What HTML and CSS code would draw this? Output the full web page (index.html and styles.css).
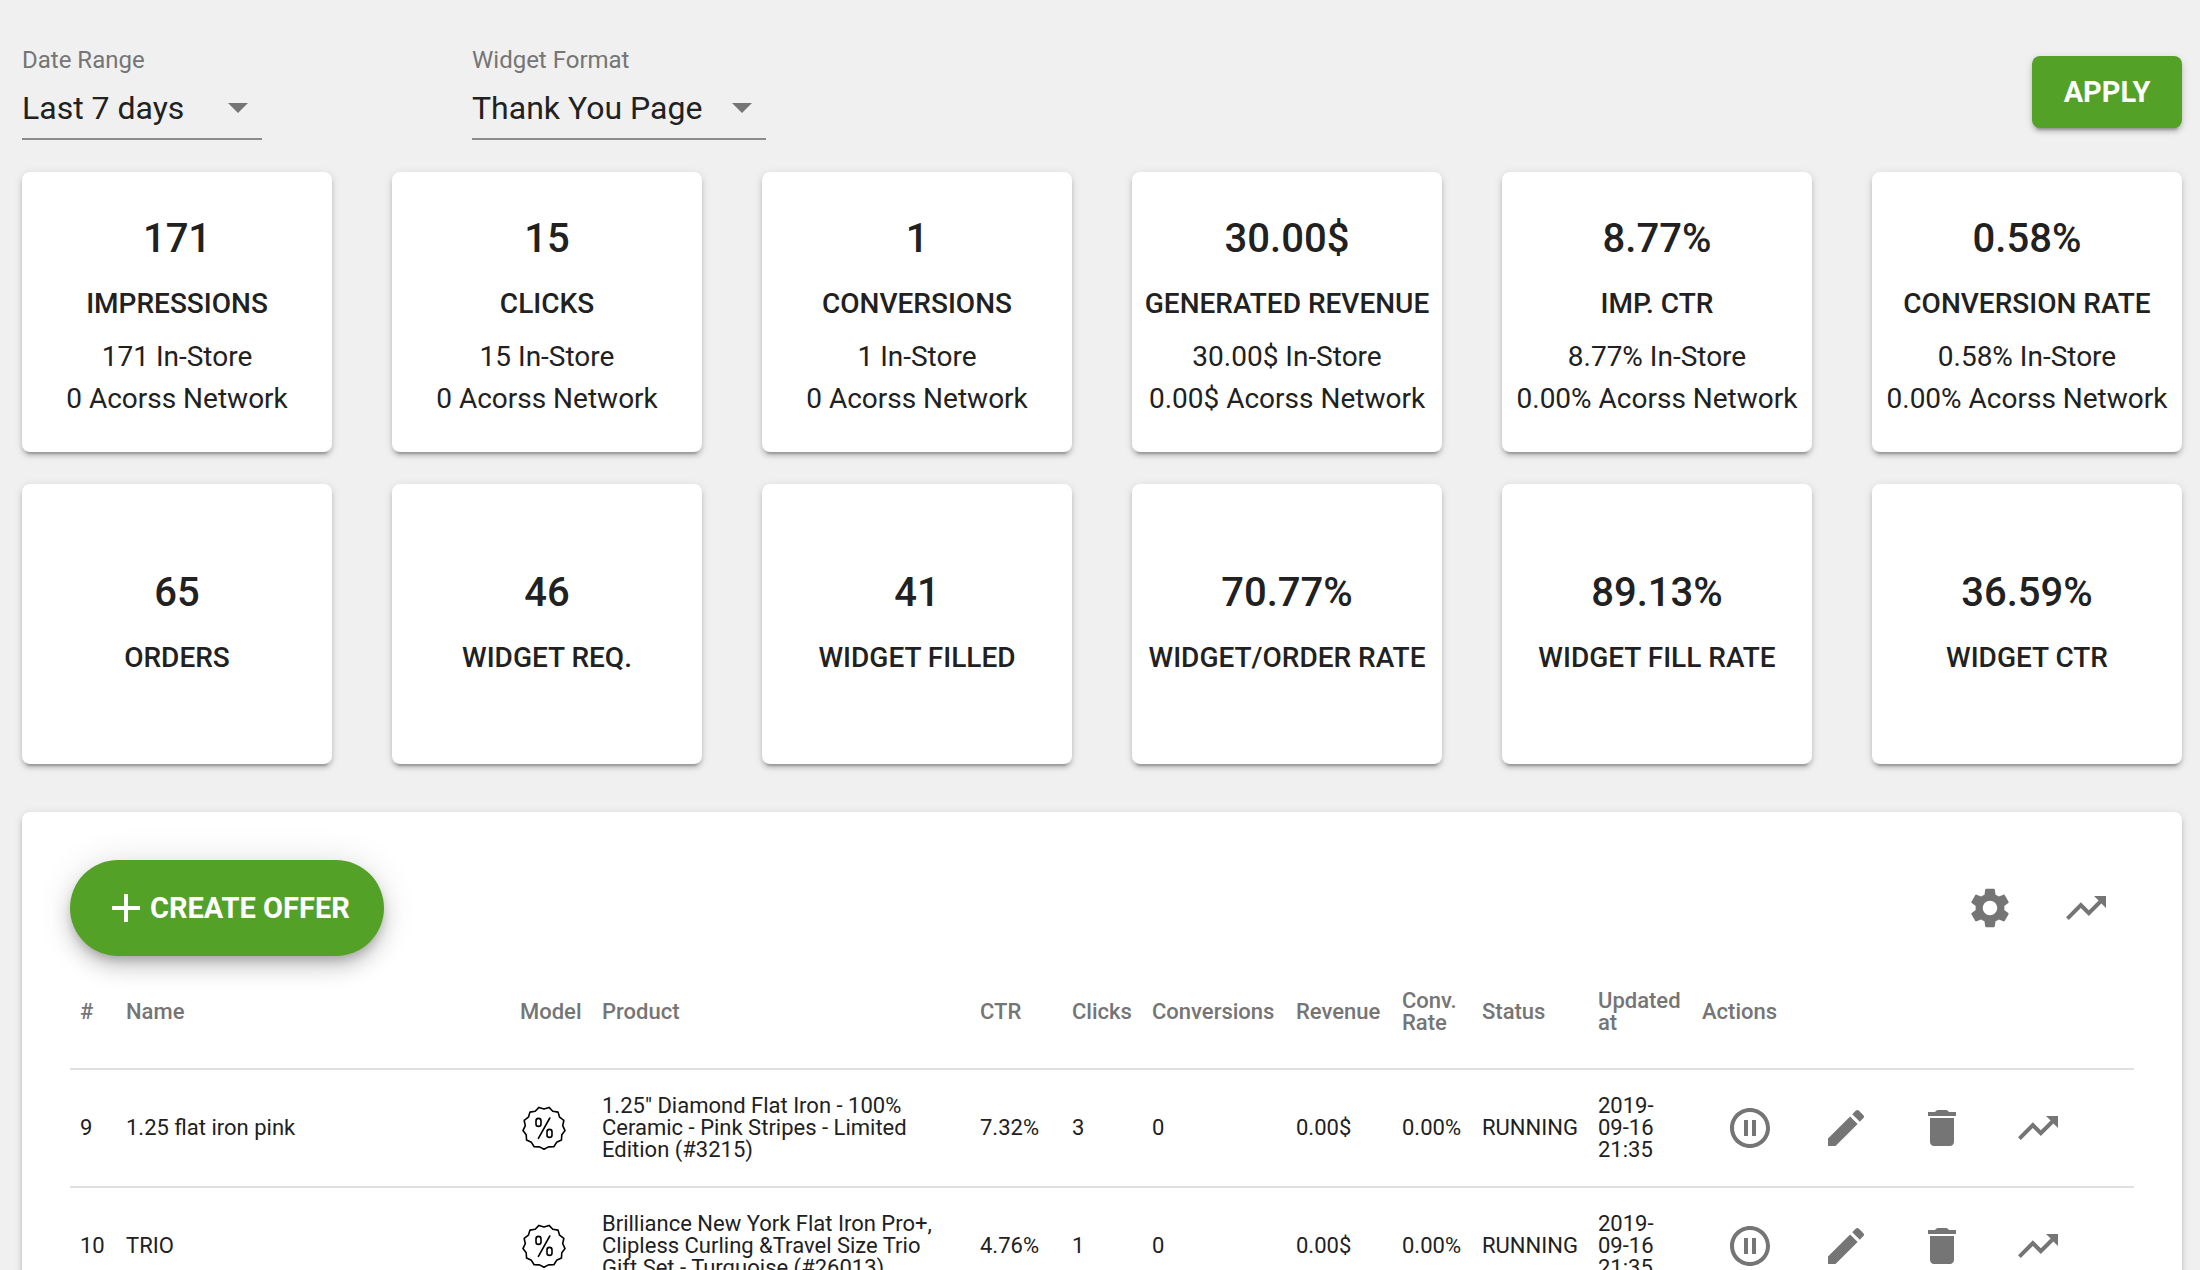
FILE: index.html
```html
<!DOCTYPE html>
<html lang="en">
<head>
<meta charset="utf-8">
<meta name="viewport" content="width=device-width, initial-scale=1">
<title>Offers</title>
<link rel="stylesheet" href="styles.css">
</head>
<body>
<svg class="sprite" aria-hidden="true">
  <symbol id="icon-trend" viewBox="0 0 24 24"><path d="M16 6l2.29 2.29-4.88 4.88-4-4L2 16.59 3.41 18l6-6 4 4 6.3-6.29L22 12V6z"/></symbol>
  <symbol id="icon-pause" viewBox="0 0 24 24"><path d="M9 16h2V8H9v8zm3-14C6.48 2 2 6.48 2 12s4.48 10 10 10 10-4.48 10-10S17.52 2 12 2zm0 18c-4.41 0-8-3.59-8-8s3.59-8 8-8 8 3.59 8 8-3.59 8-8 8zm1-4h2V8h-2v8z"/></symbol>
  <symbol id="icon-edit" viewBox="0 0 24 24"><path d="M3 17.25V21h3.75L17.81 9.94l-3.75-3.75L3 17.25zM20.71 7.04c.39-.39.39-1.02 0-1.41l-2.34-2.34c-.39-.39-1.02-.39-1.41 0l-1.83 1.83 3.75 3.75 1.83-1.83z"/></symbol>
  <symbol id="icon-delete" viewBox="0 0 24 24"><path d="M6 19c0 1.1.9 2 2 2h8c1.1 0 2-.9 2-2V7H6v12zM19 4h-3.5l-.71-.71c-.18-.18-.44-.29-.7-.29H9.91c-.26 0-.52.11-.7.29L8.5 4H5v2h14V4z"/></symbol>
  <symbol id="icon-settings" viewBox="0 0 24 24"><path d="M19.14 12.94c.04-.3.06-.61.06-.94 0-.32-.02-.64-.07-.94l2.03-1.58c.18-.14.23-.41.12-.61l-1.92-3.32c-.12-.22-.37-.29-.59-.22l-2.39.96c-.5-.38-1.03-.7-1.62-.94L14.4 2.81c-.04-.24-.24-.41-.48-.41h-3.84c-.24 0-.43.17-.47.41L9.25 5.35C8.66 5.59 8.12 5.92 7.63 6.29L5.24 5.33c-.22-.08-.47 0-.59.22L2.74 8.87C2.62 9.08 2.66 9.34 2.86 9.48l2.03 1.58C4.84 11.36 4.8 11.69 4.8 12s.02.64.07.94l-2.03 1.58c-.18.14-.23.41-.12.61l1.92 3.32c.12.22.37.29.59.22l2.39-.96c.5.38 1.03.7 1.62.94l.36 2.54c.05.24.24.41.48.41h3.84c.24 0 .44-.17.47-.41l.36-2.54c.59-.24 1.13-.56 1.62-.94l2.39.96c.22.08.47 0 .59-.22l1.92-3.32c.12-.22.07-.47-.12-.61L19.14 12.94zM12 15.6c-1.98 0-3.6-1.62-3.6-3.6s1.62-3.6 3.6-3.6 3.6 1.62 3.6 3.6-1.62 3.6-3.6 3.6z"/></symbol>
  <symbol id="icon-add" viewBox="0 0 24 24"><path d="M19 13h-6v6h-2v-6H5v-2h6V5h2v6h6v2z"/></symbol>
  <symbol id="icon-discount" viewBox="-24 -24 48 48">
    <g fill="none" stroke="#000" stroke-width="1.6" stroke-linejoin="round" stroke-linecap="round">
      <path d="M0 21.2L4.45 18.9 9.85 18.77 12.6 14.3 17.45 12.04 17.8 6.8 21.05 2.55 18.7-2.3 19.82-7.52 15.6-10.8 14.06-15.87 8.8-16.7 5.07-20.58 0-19-5.07-20.58-8.8-16.7-14.06-15.87-15.6-10.8-19.82-7.52-18.7-2.3-21.05 2.55-17.8 6.8-17.45 12.04-12.6 14.3-9.85 18.77-4.45 18.9Z"/>
      <rect x="-8" y="-9.6" width="5" height="8" rx="2.5"/>
      <rect x="3" y="1.4" width="5" height="8" rx="2.5"/>
      <path d="M5.8-10L-5.6 10.4"/>
    </g>
  </symbol>
</svg>

<main class="page">
  <form class="filters">
    <div class="field">
      <label for="range">Date Range</label>
      <div class="select">
        <select id="range" class="range"><option>Last 7 days</option><option>Last 30 days</option></select>
        <svg viewBox="0 0 20 10" aria-hidden="true"><path d="M0 0h20L10 10z"/></svg>
      </div>
    </div>
    <div class="field">
      <label for="format">Widget Format</label>
      <div class="select">
        <select id="format"><option>Thank You Page</option></select>
        <svg viewBox="0 0 20 10" aria-hidden="true"><path d="M0 0h20L10 10z"/></svg>
      </div>
    </div>
    <button class="apply" type="button">APPLY</button>
  </form>

  <section class="stats">
    <article class="card"><h2>171</h2><h3>IMPRESSIONS</h3><p>171 In-Store</p><p>0 Acorss Network</p></article>
    <article class="card"><h2>15</h2><h3>CLICKS</h3><p>15 In-Store</p><p>0 Acorss Network</p></article>
    <article class="card"><h2>1</h2><h3>CONVERSIONS</h3><p>1 In-Store</p><p>0 Acorss Network</p></article>
    <article class="card"><h2>30.00$</h2><h3>GENERATED REVENUE</h3><p>30.00$ In-Store</p><p>0.00$ Acorss Network</p></article>
    <article class="card"><h2>8.77%</h2><h3>IMP. CTR</h3><p>8.77% In-Store</p><p>0.00% Acorss Network</p></article>
    <article class="card"><h2>0.58%</h2><h3>CONVERSION RATE</h3><p>0.58% In-Store</p><p>0.00% Acorss Network</p></article>
    <article class="card"><h2>65</h2><h3>ORDERS</h3></article>
    <article class="card"><h2>46</h2><h3>WIDGET REQ.</h3></article>
    <article class="card"><h2>41</h2><h3>WIDGET FILLED</h3></article>
    <article class="card"><h2>70.77%</h2><h3>WIDGET/ORDER RATE</h3></article>
    <article class="card"><h2>89.13%</h2><h3>WIDGET FILL RATE</h3></article>
    <article class="card"><h2>36.59%</h2><h3>WIDGET CTR</h3></article>
  </section>

  <section class="panel">
    <div class="toolbar">
      <button class="create" type="button"><svg class="icon" aria-hidden="true"><use href="#icon-add"/></svg>CREATE OFFER</button>
      <div class="tools">
        <button class="icon-button" type="button" aria-label="Settings"><svg class="icon"><use href="#icon-settings"/></svg></button>
        <button class="icon-button" type="button" aria-label="Statistics"><svg class="icon"><use href="#icon-trend"/></svg></button>
      </div>
    </div>
    <table class="offers">
      <colgroup>
        <col class="col-id"><col class="col-name"><col class="col-model"><col><col class="col-ctr"><col class="col-clicks"><col class="col-conversions"><col class="col-revenue"><col class="col-rate"><col class="col-status"><col class="col-updated"><col class="col-actions">
      </colgroup>
      <thead>
        <tr><th>#</th><th>Name</th><th>Model</th><th>Product</th><th>CTR</th><th>Clicks</th><th>Conversions</th><th>Revenue</th><th>Conv. Rate</th><th>Status</th><th>Updated at</th><th>Actions</th></tr>
      </thead>
      <tbody>
        <tr>
          <td>9</td><td>1.25 flat iron pink</td>
          <td><svg class="icon" role="img" aria-label="Discount"><use href="#icon-discount"/></svg></td>
          <td class="product">1.25" Diamond Flat Iron - 100% Ceramic - Pink Stripes - Limited Edition (#3215)</td>
          <td>7.32%</td><td>3</td><td>0</td><td>0.00$</td><td>0.00%</td><td>RUNNING</td><td>2019-09-16 21:35</td>
          <td><div class="actions">
            <button class="icon-button" type="button" aria-label="Pause"><svg class="icon"><use href="#icon-pause"/></svg></button>
            <button class="icon-button" type="button" aria-label="Edit"><svg class="icon"><use href="#icon-edit"/></svg></button>
            <button class="icon-button" type="button" aria-label="Delete"><svg class="icon"><use href="#icon-delete"/></svg></button>
            <button class="icon-button" type="button" aria-label="Statistics"><svg class="icon"><use href="#icon-trend"/></svg></button>
          </div></td>
        </tr>
        <tr>
          <td>10</td><td>TRIO</td>
          <td><svg class="icon" role="img" aria-label="Discount"><use href="#icon-discount"/></svg></td>
          <td class="product">Brilliance New York Flat Iron Pro+, Clipless Curling &amp;Travel Size Trio Gift Set - Turquoise (#26013)</td>
          <td>4.76%</td><td>1</td><td>0</td><td>0.00$</td><td>0.00%</td><td>RUNNING</td><td>2019-09-16 21:35</td>
          <td><div class="actions">
            <button class="icon-button" type="button" aria-label="Pause"><svg class="icon"><use href="#icon-pause"/></svg></button>
            <button class="icon-button" type="button" aria-label="Edit"><svg class="icon"><use href="#icon-edit"/></svg></button>
            <button class="icon-button" type="button" aria-label="Delete"><svg class="icon"><use href="#icon-delete"/></svg></button>
            <button class="icon-button" type="button" aria-label="Statistics"><svg class="icon"><use href="#icon-trend"/></svg></button>
          </div></td>
        </tr>
      </tbody>
    </table>
  </section>
</main>
</body>
</html>
```
FILE: styles.css
```css
* {
  box-sizing: border-box;
}

body {
  margin: 0;
  background: #f0f0f0;
  color: #212121;
  font-family: Roboto, sans-serif;
}

button,
select {
  border: 0;
  font-family: inherit;
}

.sprite {
  display: none;
}

.page {
  height: 100vh;
  padding: 44px 18px 48px 22px;
  overflow-y: auto;
  scrollbar-width: none;
}

.filters {
  display: grid;
  grid-template-columns: 450px 450px 1fr;
  align-items: start;
}

.field {
  justify-self: start;
}

.field label {
  display: block;
  color: #757575;
  font-size: 24px;
  line-height: 32px;
}

.select {
  display: grid;
  align-items: center;
  padding-top: 2px;
  border-bottom: 2px solid #8c8c8c;
}

.select > * {
  grid-area: 1 / 1;
}

.select select {
  appearance: none;
  height: 60px;
  padding: 0 63px 0 0;
  background: transparent;
  color: #212121;
  font-size: 32px;
}

.select .range {
  width: 240px;
}

.select svg {
  justify-self: end;
  width: 20px;
  height: 10px;
  margin-right: 14px;
  fill: #757575;
  pointer-events: none;
}

.apply,
.create {
  background: #54a127;
  color: #fff;
  font-size: 29px;
  font-weight: 700;
}

.apply {
  justify-self: end;
  width: 150px;
  height: 72px;
  margin-top: 12px;
  border-radius: 8px;
}

.apply,
.card,
.panel {
  box-shadow: 0 6px 2px -4px rgba(0, 0, 0, .2), 0 4px 4px rgba(0, 0, 0, .14), 0 2px 10px rgba(0, 0, 0, .12);
}

.stats {
  display: grid;
  grid-template-columns: repeat(6, 1fr);
  gap: 32px 60px;
  margin-top: 32px;
}

.card {
  display: flex;
  flex-direction: column;
  justify-content: center;
  min-height: 280px;
  padding-top: 2px;
  border-radius: 8px;
  background: #fff;
  text-align: center;
  white-space: nowrap;
}

.card h2,
.card h3,
.card p {
  margin: 0;
}

.card h2 {
  font-size: 40px;
  font-weight: 500;
  line-height: 66px;
}

.card h3 {
  font-size: 28px;
  font-weight: 500;
  line-height: 64px;
}

.card p {
  font-size: 28px;
  line-height: 42px;
}

.panel {
  margin-top: 48px;
  padding: 48px;
  border-radius: 8px;
  background: #fff;
}

.toolbar {
  display: flex;
  align-items: center;
  justify-content: space-between;
}

.create {
  display: flex;
  align-items: center;
  height: 96px;
  padding: 0 34px 0 32px;
  border-radius: 48px;
  box-shadow: 0 6px 10px -2px rgba(0, 0, 0, .2), 0 12px 20px rgba(0, 0, 0, .14), 0 2px 36px rgba(0, 0, 0, .12);
}

.tools,
.actions {
  display: flex;
}

.icon {
  display: block;
  width: 48px;
  height: 48px;
  fill: currentColor;
}

.icon-button {
  padding: 24px;
  background: transparent;
  color: #757575;
}

.offers {
  width: 100%;
  table-layout: fixed;
  border-collapse: separate;
  border-spacing: 0;
  font-size: 22px;
  line-height: 22px;
}

.offers th,
.offers td {
  padding: 10px;
  border-bottom: 2px solid #e0e0e0;
  text-align: left;
}

.offers th {
  height: 114px;
  color: #757575;
  font-weight: 500;
}

.offers td {
  height: 118px;
}

.offers .product {
  padding-right: 30px;
}

.col-id { width: 46px; }
.col-name { width: 394px; }
.col-model { width: 82px; }
.col-ctr { width: 92px; }
.col-clicks { width: 80px; }
.col-conversions { width: 144px; }
.col-revenue { width: 106px; }
.col-rate { width: 80px; }
.col-status { width: 116px; }
.col-updated { width: 104px; }
.col-actions { width: 442px; }
```
